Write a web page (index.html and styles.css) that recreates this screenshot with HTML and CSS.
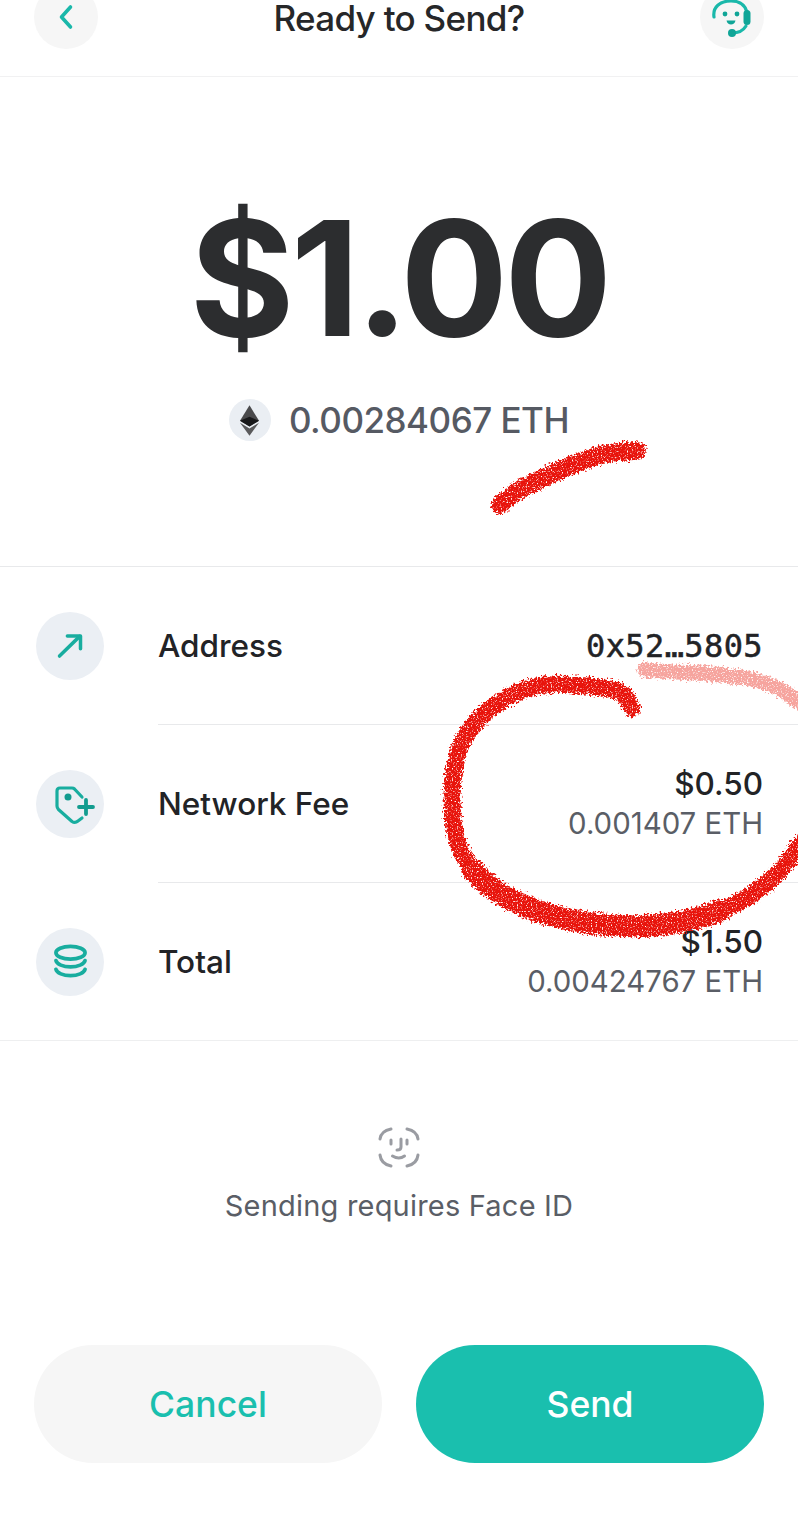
FILE: index.html
```html
<!DOCTYPE html>
<html lang="en">
<head>
<meta charset="utf-8">
<title>Ready to Send?</title>
<link rel="stylesheet" href="styles.css">
</head>
<body>
<main class="page">
  <header class="topbar">
    <button class="round-btn" aria-label="Back">
      <svg class="back-icon" viewBox="0 0 16 28"><path d="M12.500 4 3.500 14l9 10" /></svg>
    </button>
    <h1 class="title">Ready to Send?</h1>
    <button class="round-btn" aria-label="Support">
      <svg class="support-icon" viewBox="0 0 44 44">
        <path class="support-line" d="M4 22C2.500 12 10 6 21 6c8 0 14 4 16 11" />
        <path class="support-line" d="M36 31c-3 5-8 7-14 7" />
        <rect class="support-fill" x="33.500" y="15" width="7" height="15" rx="3.500" />
        <circle class="support-fill" cx="22" cy="38" r="4" />
        <circle class="support-fill" cx="15" cy="19" r="2.400" />
        <circle class="support-fill" cx="27" cy="19" r="2.400" />
        <path class="support-fill" d="M16.500 25.500h9c-.4 2.800-2.400 4-4.500 4s-4.100-1.200-4.500-4z" />
      </svg>
    </button>
  </header>

  <section class="hero">
    <div class="amount">$1.00</div>
    <div class="crypto">
      <span class="eth-badge">
        <svg class="eth-icon" viewBox="0 0 20 32">
          <path class="eth-a" d="M10 0 0 16.300l10 5.900 10-5.900z" />
          <path class="eth-b" d="M10 12 0 16.300l10 5.900 10-5.900z" />
          <path class="eth-c" d="M10 24.300 0 18.400 10 32l10-13.600z" />
        </svg>
      </span>
      <span>0.00284067 ETH</span>
    </div>
  </section>

  <section class="details">
    <div class="row">
      <span class="row-icon">
        <svg viewBox="0 0 32 32" class="glyph arrow"><path d="M4 27.500 27 5" /><path d="M13 4.500H28V19" /></svg>
      </span>
      <div class="row-body">
        <span class="row-label">Address</span>
        <span class="address">0x52…5805</span>
      </div>
    </div>
    <div class="row">
      <span class="row-icon">
        <svg viewBox="0 0 44 44" class="glyph tag">
          <path d="M34 15 26.500 7Q25.500 6 24 6H12Q9 6 9 9V24Q9 26 10.500 27.500L24 39.500Q27 41.500 30 39L34 36" />
          <circle class="glyph-dot" cx="20" cy="15" r="3.500" />
          <path class="plus" d="M31 25H45M38 18V32" />
        </svg>
      </span>
      <div class="row-body">
        <span class="row-label">Network Fee</span>
        <div class="values">
          <span class="fiat">$0.50</span>
          <span class="eth-value">0.001407 ETH</span>
        </div>
      </div>
    </div>
    <div class="row">
      <span class="row-icon">
        <svg viewBox="0 0 36 36" class="glyph coins">
          <ellipse cx="18" cy="9" rx="15" ry="6.500" />
          <path d="M3 17c1 4 7.500 6.500 15 6.500S32 21 33 17" />
          <path d="M3 26c1 4 7.500 6.500 15 6.500S32 30 33 26" />
        </svg>
      </span>
      <div class="row-body">
        <span class="row-label">Total</span>
        <div class="values">
          <span class="fiat">$1.50</span>
          <span class="eth-value">0.00424767 ETH</span>
        </div>
      </div>
    </div>
  </section>

  <section class="face">
    <svg class="face-icon" viewBox="0 0 42 42">
      <path d="M2 12Q3 4 13 2" />
      <path d="M29 2Q39 4 40 12" />
      <path d="M2 28Q3 37 13 39" />
      <path d="M29 39Q39 37 40 28" />
      <path d="M13 13v4M29 13v4" />
      <path d="M23 12v8q0 3-4 3" />
      <path d="M14.500 29Q21 33 26.500 29" />
    </svg>
    <p class="face-text">Sending requires Face ID</p>
  </section>

  <footer class="actions">
    <button class="action cancel">Cancel</button>
    <button class="action send">Send</button>
  </footer>

  <svg class="scribble" viewBox="0 0 798 1540" aria-hidden="true">
    <defs>
      <filter id="rough" x="0" y="0" width="798" height="1540" filterUnits="userSpaceOnUse" color-interpolation-filters="sRGB">
        <feTurbulence type="fractalNoise" baseFrequency="0.45" numOctaves="2" seed="4" result="noise" />
        <feDisplacementMap in="SourceGraphic" in2="noise" scale="10" xChannelSelector="R" yChannelSelector="G" result="edge" />
        <feTurbulence type="fractalNoise" baseFrequency="0.8" numOctaves="1" seed="9" />
        <feColorMatrix type="matrix" values="0 0 0 0 0  0 0 0 0 0  0 0 0 0 0  5 0 0 0 -1.200" result="holes" />
        <feComposite in="edge" in2="holes" operator="in" />
      </filter>
    </defs>
    <g filter="url(#rough)">
      <path class="mark mark-short" d="M500 505Q515 491 533 483Q550 475 567 467Q585 460 600 455Q620 451 637 451" />
      <path class="mark mark-faint" d="M645 670Q670 672 697 673Q725 675 747 678Q765 682 780 689L802 704" />
      <path class="mark" d="M632 708L628 700Q625 692 611 689Q597 687 575 685Q553 683 536 686Q520 690 503 700Q487 710 475 723Q463 737 458 753Q453 770 452 795Q452 820 456 836Q460 853 473 870Q487 887 508 898Q530 910 555 916Q580 923 608 925Q637 928 667 924Q697 920 722 910Q747 900 763 886Q780 873 791 857L802 842" />
      <path class="mark mark-wide" d="M473 870Q487 887 508 898Q530 910 555 916Q580 923 608 925Q637 928 667 924Q697 920 722 910" />
    </g>
  </svg>
</main>
</body>
</html>
```

FILE: styles.css
```css
* { box-sizing: border-box; }

html, body { margin: 0; padding: 0; background: #fff; }

body {
  font-family: Inter, "Liberation Sans", sans-serif;
  color: #222326;
}

.page {
  position: relative;
  width: 798px;
  height: 1540px;
  overflow: hidden;
  background: #fff;
}

.topbar {
  display: flex;
  justify-content: space-between;
  align-items: flex-start;
  height: 77px;
  padding: 0 34px;
  border-bottom: 1px solid #f1f1f2;
}

.round-btn {
  display: flex;
  align-items: center;
  justify-content: center;
  flex: none;
  width: 64px;
  height: 64px;
  margin-top: -15px;
  padding: 0;
  border: 0;
  border-radius: 50%;
  background: #f6f6f6;
}

.back-icon {
  width: 16px;
  height: 28px;
  fill: none;
  stroke: #1ab8aa;
  stroke-width: 3.600;
  stroke-linecap: round;
  stroke-linejoin: round;
}

.support-icon { width: 44px; height: 44px; flex: none; overflow: visible; }
.support-line { fill: none; stroke: #1ab8aa; stroke-width: 3.200; stroke-linecap: round; }
.support-fill { fill: #10a597; }

.title {
  margin: 0;
  font-size: 35px;
  line-height: 36px;
  font-weight: 500;
  letter-spacing: -0.7px;
  color: #262729;
}

.hero {
  display: flex;
  flex-direction: column;
  align-items: center;
  height: 490px;
  padding-top: 111px;
  border-bottom: 1px solid #e8e9eb;
}

.amount {
  font-size: 160px;
  line-height: 180px;
  font-weight: 700;
  letter-spacing: -4px;
  color: #2c2d2f;
}

.crypto {
  display: flex;
  align-items: center;
  gap: 18px;
  margin-top: 30px;
  font-size: 35px;
  line-height: 44px;
  font-weight: 500;
  letter-spacing: -0.5px;
  color: #565a63;
}

.eth-badge {
  display: flex;
  align-items: center;
  justify-content: center;
  width: 42px;
  height: 42px;
  border-radius: 50%;
  background: #eaeef3;
}

.eth-icon { width: 19px; height: 31px; }
.eth-a { fill: #4a4a4c; }
.eth-b { fill: #18181a; }
.eth-c { fill: #5a5a5c; }

.details { border-bottom: 1px solid #eeeff0; }

.row {
  display: flex;
  align-items: stretch;
  padding-left: 36px;
}

.row-icon {
  display: flex;
  align-items: center;
  justify-content: center;
  flex: none;
  align-self: center;
  width: 68px;
  height: 68px;
  margin-right: 54px;
  border-radius: 50%;
  background: #ebeff4;
}

.row-body {
  display: flex;
  flex: 1;
  align-items: center;
  justify-content: space-between;
  height: 158px;
  padding-right: 35px;
  border-bottom: 1px solid #e8e9eb;
}

.row:last-child .row-body { height: 157px; border-bottom: 0; }

.row-label {
  font-size: 31.500px;
  font-weight: 500;
  color: #222326;
}

.address {
  font-family: "DejaVu Sans Mono", monospace;
  font-size: 32px;
  letter-spacing: 0.4px;
  -webkit-text-stroke: 0.5px #222326;
  color: #222326;
}

.values {
  display: flex;
  flex-direction: column;
  align-items: flex-end;
}

.fiat {
  font-size: 31.500px;
  line-height: 40px;
  font-weight: 500;
  color: #222326;
}

.eth-value {
  font-size: 29.400px;
  line-height: 40px;
  color: #5a5e66;
}

.glyph {
  flex: none;
  fill: none;
  overflow: visible;
  stroke: #18ad9f;
  stroke-linecap: round;
  stroke-linejoin: round;
}

.glyph.arrow { width: 28px; height: 28px; stroke-width: 4; }
.glyph.tag { width: 44px; height: 44px; stroke-width: 3.200; }
.glyph-dot { fill: #129c8f; stroke: none; }
.plus { stroke: #129c8f; stroke-width: 3.800; }
.glyph.coins { width: 35px; height: 35px; stroke-width: 3.800; }

.face {
  display: flex;
  flex-direction: column;
  align-items: center;
  height: 304px;
  padding-top: 86px;
}

.face-icon {
  width: 42px;
  height: 42px;
  fill: none;
  stroke: #9a9ca2;
  stroke-width: 3;
  stroke-linecap: round;
  stroke-linejoin: round;
}

.face-text {
  margin: 15px 0 0;
  font-size: 29px;
  line-height: 44px;
  letter-spacing: 0.2px;
  color: #5a5e66;
}

.actions {
  display: flex;
  gap: 34px;
  padding: 0 34px;
}

.action {
  flex: 1;
  height: 118px;
  padding: 0;
  border: 0;
  border-radius: 59px;
  font: 500 35.500px Inter, "Liberation Sans", sans-serif;
}

.cancel { background: #f6f6f6; color: #1abfae; }
.send { background: #1abfae; color: #fff; }

.scribble {
  position: absolute;
  inset: 0;
  width: 798px;
  height: 1540px;
  pointer-events: none;
}

.mark {
  fill: none;
  stroke: #e8140c;
  stroke-width: 17;
  stroke-linecap: round;
  stroke-linejoin: round;
}

.mark-wide { stroke-width: 22; }
.mark-short { stroke-width: 18; }
.mark-faint { stroke: #f0675e; stroke-width: 15; opacity: 0.6; }
```
